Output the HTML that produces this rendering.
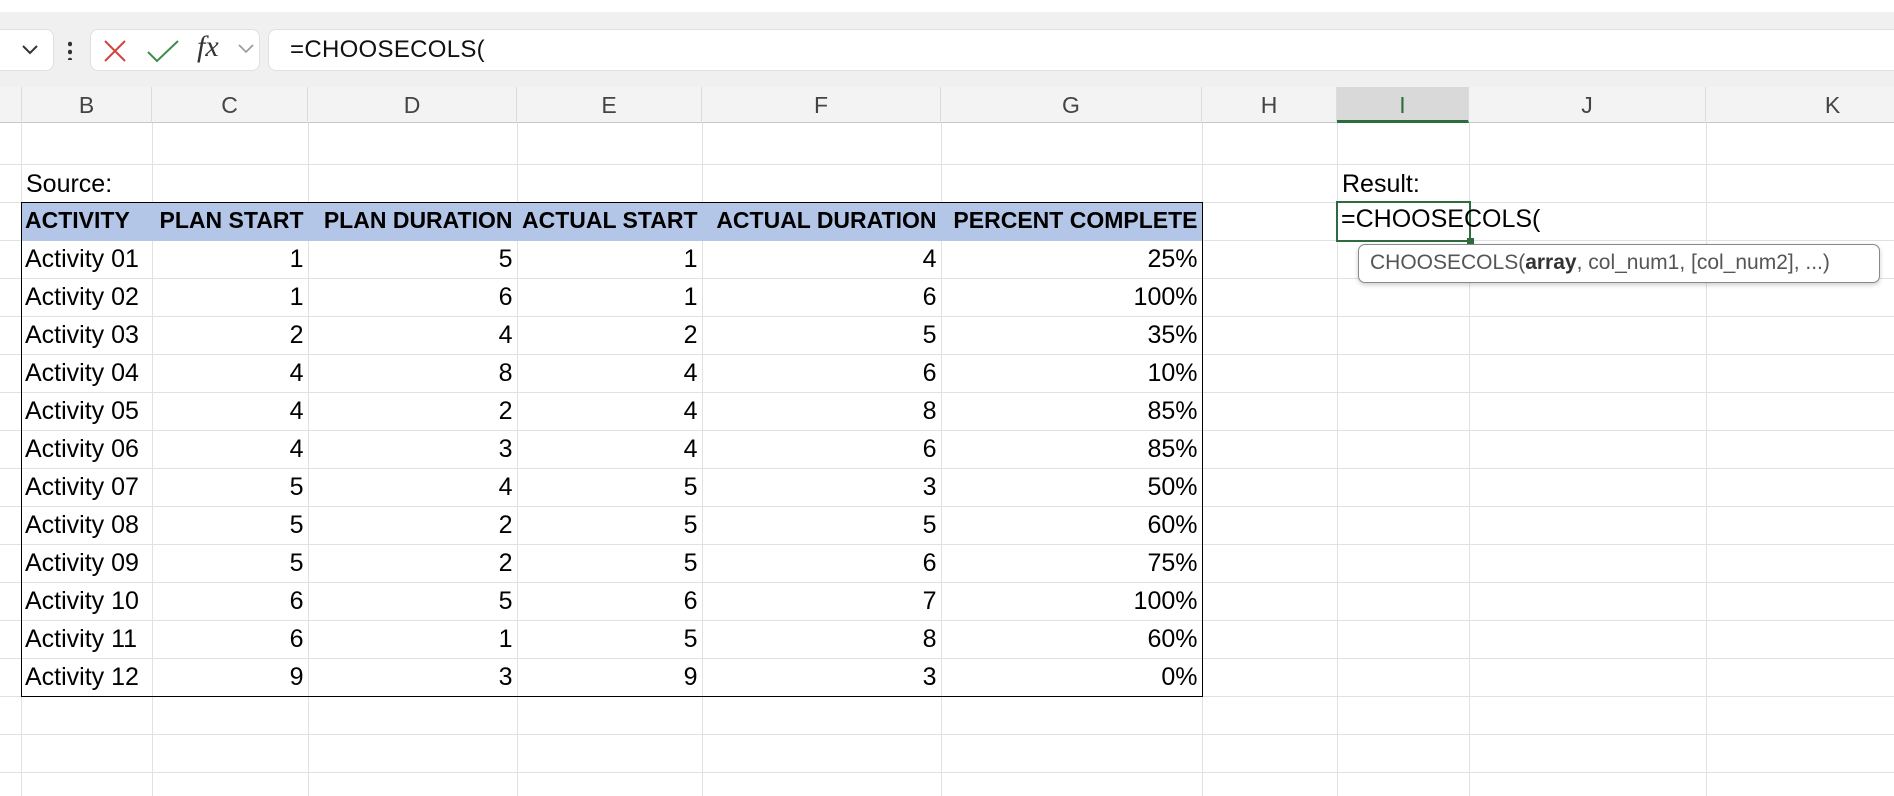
<!DOCTYPE html>
<html><head><meta charset="utf-8"><style>
*{margin:0;padding:0;box-sizing:border-box}
body{width:1894px;height:796px;overflow:hidden;background:#fff;font-family:"Liberation Sans",sans-serif;position:relative}
.abs{position:absolute}
#bar{left:0;top:12px;width:1894px;height:75px;background:#f0f0f0}
.box{background:#fff;border:1px solid #e0e0e0;border-radius:8px;position:absolute}
#colhdr{left:0;top:87px;width:1894px;height:36px;background:#f3f3f3;border-bottom:1px solid #c8c8c8}
.ch{position:absolute;top:87px;height:36px;line-height:36px;text-align:center;font-size:23px;color:#444;border-right:1px solid #dcdcdc}
#sheet{left:0;top:127px;width:1894px;height:669px;background:repeating-linear-gradient(to bottom,transparent 0,transparent 37px,#e1e1e1 37px,#e1e1e1 38px)}
.vl{position:absolute;top:123px;width:1px;height:673px;background:#e1e1e1}
table{position:absolute;left:21px;top:202px;border-collapse:collapse;table-layout:fixed;width:1181px}
td{height:38px;padding:0 4px;font-size:25px;color:#000;text-align:right;white-space:nowrap;border-bottom:1px solid #e1e1e1;border-right:1px solid #e1e1e1;overflow:visible}
td:first-child{text-align:left}
tr.h td{background:#b4c6e7;font-weight:bold;font-size:23px;text-align:left;border-color:#b4c6e7}
tr.h td:not(:first-child){text-align:right}
</style></head><body>
<div id="bar" class="abs"></div>
<div class="box" style="left:-10px;top:29px;width:64px;height:42px"></div>
<svg class="abs" style="left:20px;top:42px" width="20" height="14"><path d="M3 4 L10 11 L17 4" stroke="#333" stroke-width="2" fill="none"/></svg>
<div class="abs" style="left:68px;top:40px;width:4px;height:20px;background:radial-gradient(circle,#333 2px,transparent 2.5px) 0 0/4px 8px repeat-y"></div>
<div class="box" style="left:90px;top:29px;width:170px;height:42px"></div>
<svg class="abs" style="left:102px;top:38px" width="26" height="26"><path d="M3 3 L23 23 M23 3 L3 23" stroke="#d0453d" stroke-width="2" fill="none"/></svg>
<svg class="abs" style="left:146px;top:38px" width="34" height="26"><path d="M2 14 L11 23 L32 3" stroke="#3e8e4b" stroke-width="2" fill="none"/></svg>
<div class="abs" style="left:197px;top:30px;font-family:'Liberation Serif',serif;font-style:italic;font-size:30px;color:#333">fx</div>
<svg class="abs" style="left:236px;top:42px" width="20" height="14"><path d="M3 3 L10 10 L17 3" stroke="#999" stroke-width="1.6" fill="none"/></svg>
<div class="box" style="left:268px;top:29px;width:1640px;height:42px"></div>
<div class="abs" style="left:290px;top:36px;font-size:24px;color:#111;letter-spacing:0.3px">=CHOOSECOLS(</div>

<div id="colhdr" class="abs"></div>
<div class="ch" style="left:0;width:22px"></div>
<div class="ch" style="left:22px;width:130px">B</div>
<div class="ch" style="left:152px;width:156px">C</div>
<div class="ch" style="left:308px;width:209px">D</div>
<div class="ch" style="left:517px;width:185px">E</div>
<div class="ch" style="left:702px;width:239px">F</div>
<div class="ch" style="left:941px;width:261px">G</div>
<div class="ch" style="left:1202px;width:135px">H</div>
<div class="ch" style="left:1337px;width:132px;background:#d9d9d9;color:#2e6b3f;border-bottom:3px solid #2e6b3f;height:36px">I</div>
<div class="ch" style="left:1469px;width:237px">J</div>
<div class="ch" style="left:1706px;width:254px">K</div>

<div id="sheet" class="abs"></div>
<div class="vl" style="left:21px"></div><div class="vl" style="left:152px"></div><div class="vl" style="left:308px"></div><div class="vl" style="left:517px"></div><div class="vl" style="left:702px"></div><div class="vl" style="left:941px"></div><div class="vl" style="left:1202px"></div><div class="vl" style="left:1337px"></div><div class="vl" style="left:1469px"></div><div class="vl" style="left:1706px"></div>

<div class="abs" style="left:26px;top:170px;font-size:25px">Source:</div>
<div class="abs" style="left:1342px;top:170px;font-size:25px">Result:</div>

<table>
<colgroup><col style="width:131px"><col style="width:156px"><col style="width:209px"><col style="width:185px"><col style="width:239px"><col style="width:261px"></colgroup>
<tr class="h"><td>ACTIVITY</td><td>PLAN START</td><td>PLAN DURATION</td><td>ACTUAL START</td><td>ACTUAL DURATION</td><td>PERCENT COMPLETE</td></tr>
<tr><td>Activity 01</td><td>1</td><td>5</td><td>1</td><td>4</td><td>25%</td></tr>
<tr><td>Activity 02</td><td>1</td><td>6</td><td>1</td><td>6</td><td>100%</td></tr>
<tr><td>Activity 03</td><td>2</td><td>4</td><td>2</td><td>5</td><td>35%</td></tr>
<tr><td>Activity 04</td><td>4</td><td>8</td><td>4</td><td>6</td><td>10%</td></tr>
<tr><td>Activity 05</td><td>4</td><td>2</td><td>4</td><td>8</td><td>85%</td></tr>
<tr><td>Activity 06</td><td>4</td><td>3</td><td>4</td><td>6</td><td>85%</td></tr>
<tr><td>Activity 07</td><td>5</td><td>4</td><td>5</td><td>3</td><td>50%</td></tr>
<tr><td>Activity 08</td><td>5</td><td>2</td><td>5</td><td>5</td><td>60%</td></tr>
<tr><td>Activity 09</td><td>5</td><td>2</td><td>5</td><td>6</td><td>75%</td></tr>
<tr><td>Activity 10</td><td>6</td><td>5</td><td>6</td><td>7</td><td>100%</td></tr>
<tr><td>Activity 11</td><td>6</td><td>1</td><td>5</td><td>8</td><td>60%</td></tr>
<tr><td>Activity 12</td><td>9</td><td>3</td><td>9</td><td>3</td><td>0%</td></tr>
</table>
<div class="abs" style="left:21px;top:202px;width:1182px;height:495px;border:1.5px solid #000"></div>

<div class="abs" style="left:1336px;top:201px;width:135px;height:41px;border:2.5px solid #2e6b3f;background:#fff"></div>
<div class="abs" style="left:1467px;top:238px;width:7px;height:7px;background:#2e6b3f"></div>
<div class="abs" style="left:1341px;top:205px;font-size:25px;color:#000">=CHOOSECOLS(</div>
<div class="abs" style="left:1358px;top:244px;width:522px;height:39px;border:1.5px solid #888;border-radius:7px;background:#fff;box-shadow:0 2px 5px rgba(0,0,0,.2);font-size:21px;color:#555;line-height:36px;padding-left:11px;white-space:nowrap">CHOOSECOLS(<b style="color:#333">array</b>, col_num1, [col_num2], ...)</div>
</body></html>
